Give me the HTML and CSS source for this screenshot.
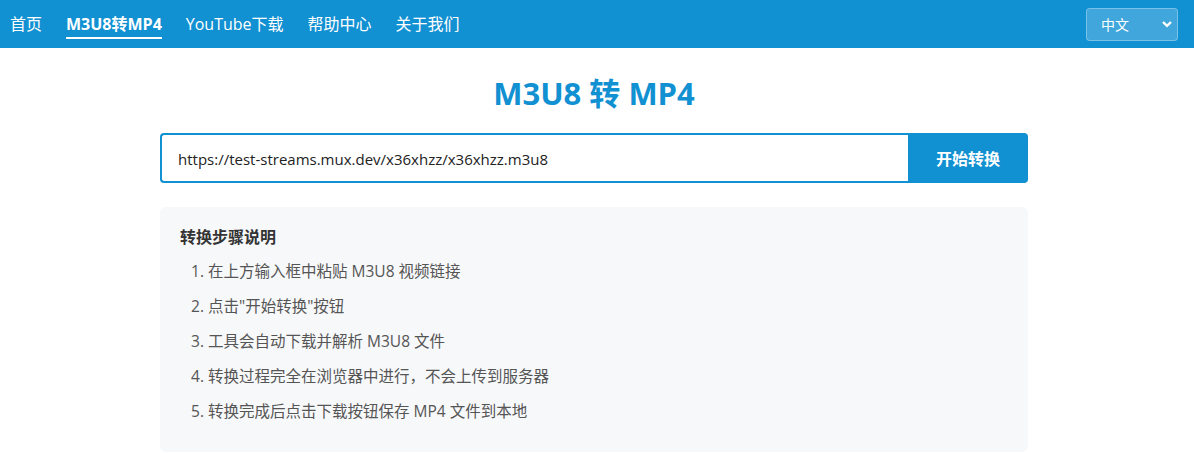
FILE: index.html
```html
<!DOCTYPE html>
<html lang="zh-CN">
<head>
    <meta charset="UTF-8" />
    <meta name="viewport" content="width=device-width, initial-scale=1.0" />
    <title>M3U8 转 MP4</title>
    <link rel="stylesheet" href="styles.css">
</head>
<body>
    <header class="topbar">
        <nav class="nav">
            <a href="#">首页</a>
            <a href="#" class="active">M3U8转MP4</a>
            <a href="#">YouTube下载</a>
            <a href="#">帮助中心</a>
            <a href="#">关于我们</a>
        </nav>
        <div class="lang">
            <span>中文</span>
            <svg width="12" height="8" viewBox="0 0 12 8"><path d="M2 2 L6 5.8 L10 2" fill="none" stroke="#fff" stroke-width="2.4"/></svg>
        </div>
    </header>

    <main class="container">
        <h1 class="title">M3U8 转 MP4</h1>

        <div class="convert-box">
            <input type="text" class="url-input" value="https://test-streams.mux.dev/x36xhzz/x36xhzz.m3u8" />
            <button class="convert-btn">开始转换</button>
        </div>

        <div class="steps">
            <h3>转换步骤说明</h3>
            <ol>
                <li>在上方输入框中粘贴 M3U8 视频链接</li>
                <li>点击"开始转换"按钮</li>
                <li>工具会自动下载并解析 M3U8 文件</li>
                <li>转换过程完全在浏览器中进行，不会上传到服务器</li>
                <li>转换完成后点击下载按钮保存 MP4 文件到本地</li>
            </ol>
        </div>
    </main>
</body>
</html>
```

FILE: styles.css
```css
* {
    margin: 0;
    padding: 0;
    box-sizing: border-box;
}
body {
    font-family: "Open Sans", "Noto Sans CJK SC", sans-serif;
    background: #fff;
    color: #333;
    overflow: hidden;
}
.topbar {
    height: 48px;
    background-color: #1190d2;
    display: flex;
    align-items: center;
    justify-content: space-between;
    padding: 0 16px 0 10px;
}
.nav {
    display: flex;
    gap: 24px;
    margin-top: 3px;
}
.nav a {
    color: #fff;
    text-decoration: none;
    font-size: 16px;
    line-height: 22px;
    padding-bottom: 2px;
    border-bottom: 2px solid transparent;
}
.nav a.active {
    font-weight: bold;
    border-bottom-color: #fff;
}
.lang {
    width: 92px;
    height: 33px;
    display: flex;
    align-items: center;
    justify-content: space-between;
    padding: 0 4px 0 14px;
    background: rgba(255, 255, 255, 0.2);
    border: 1px solid rgba(255, 255, 255, 0.3);
    border-radius: 4px;
    color: #fff;
    font-size: 14px;
}
.container {
    width: 868px;
    margin: 0 auto;
    transform: translateX(-3px);
}
.title {
    text-align: center;
    color: #1190d2;
    font-size: 31px;
    font-weight: bold;
    line-height: 40px;
    margin: 25px 0 20px;
}
.convert-box {
    display: flex;
    height: 50px;
}
.url-input {
    flex: 1;
    border: 2px solid #1190d2;
    border-right: none;
    border-radius: 4px 0 0 4px;
    padding: 1px 16px 0;
    font-family: inherit;
    font-size: 15px;
    color: #222;
    outline: none;
}
.convert-btn {
    width: 120px;
    border: none;
    background: #1190d2;
    color: #fff;
    font-family: inherit;
    font-size: 16px;
    font-weight: bold;
    border-radius: 0 4px 4px 0;
}
.steps {
    margin-top: 24px;
    background: #f7f8fa;
    border-radius: 6px;
    padding: 19px 20px 30px;
}
.steps h3 {
    font-size: 16px;
    font-weight: bold;
    color: #333;
    line-height: 22px;
    margin-bottom: 12px;
}
.steps ol {
    padding-left: 28px;
}
.steps li {
    font-size: 15.5px;
    color: #555;
    line-height: 22px;
    margin-bottom: 13px;
}
.steps li:last-child {
    margin-bottom: 0;
}
```
